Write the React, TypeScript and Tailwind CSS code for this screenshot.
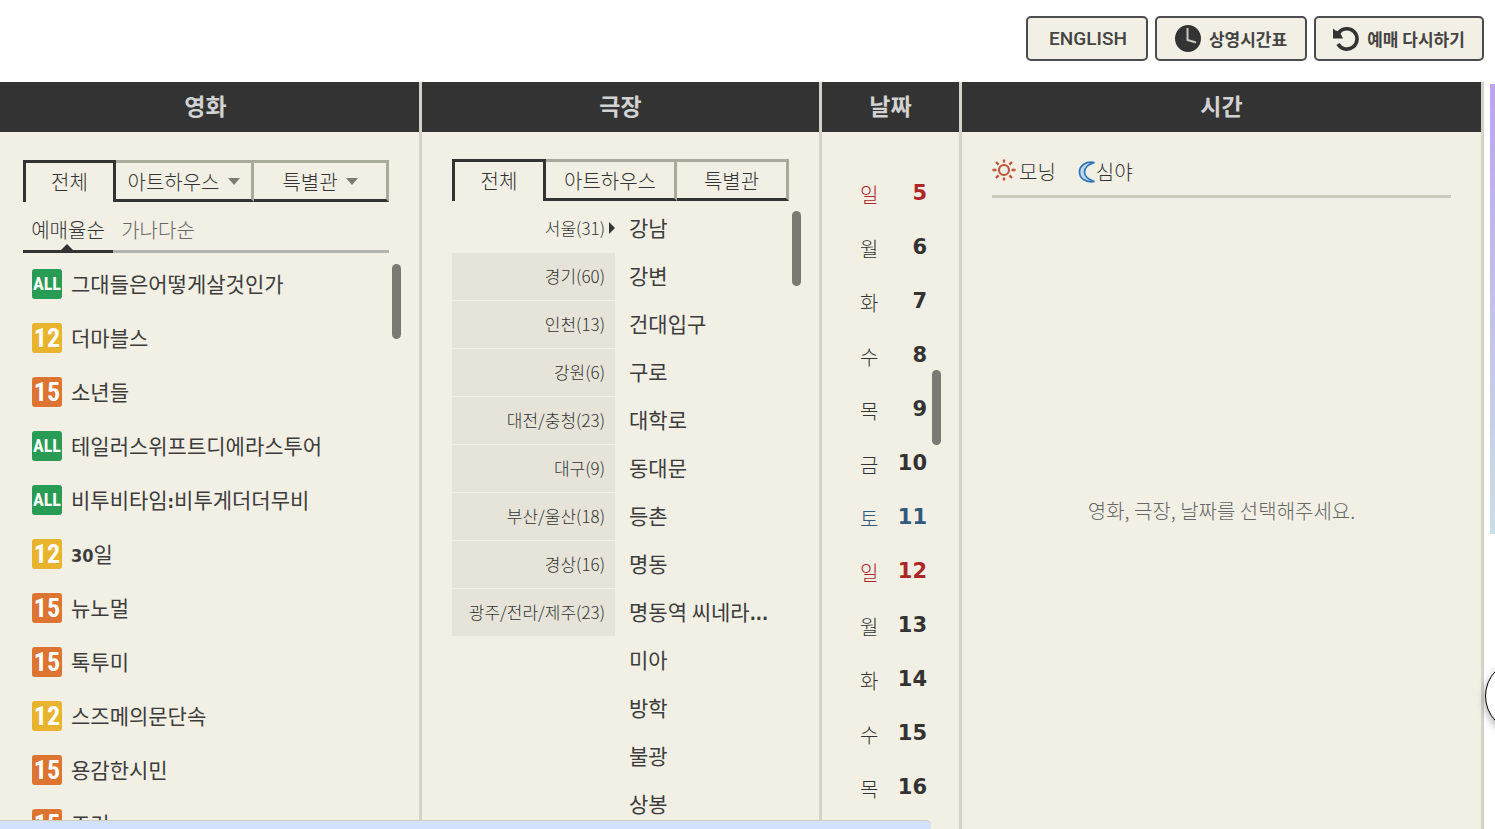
import type { ReactNode } from "react";

type Rating = "ALL" | "12" | "15";

const movies: { rating: Rating; title: string }[] = [
  { rating: "ALL", title: "그대들은어떻게살것인가" },
  { rating: "12", title: "더마블스" },
  { rating: "15", title: "소년들" },
  { rating: "ALL", title: "테일러스위프트디에라스투어" },
  { rating: "ALL", title: "비투비타임:비투게더더무비" },
  { rating: "12", title: "30일" },
  { rating: "15", title: "뉴노멀" },
  { rating: "15", title: "톡투미" },
  { rating: "12", title: "스즈메의문단속" },
  { rating: "15", title: "용감한시민" },
  { rating: "15", title: "조커" },
];

const regions = [
  { name: "서울", count: 31 },
  { name: "경기", count: 60 },
  { name: "인천", count: 13 },
  { name: "강원", count: 6 },
  { name: "대전/충청", count: 23 },
  { name: "대구", count: 9 },
  { name: "부산/울산", count: 18 },
  { name: "경상", count: 16 },
  { name: "광주/전라/제주", count: 23 },
];

const theaters = [
  "강남",
  "강변",
  "건대입구",
  "구로",
  "대학로",
  "동대문",
  "등촌",
  "명동",
  "명동역 씨네라...",
  "미아",
  "방학",
  "불광",
  "상봉",
];

const dates = [
  ["일", 5],
  ["월", 6],
  ["화", 7],
  ["수", 8],
  ["목", 9],
  ["금", 10],
  ["토", 11],
  ["일", 12],
  ["월", 13],
  ["화", 14],
  ["수", 15],
  ["목", 16],
] as const;

const ratingStyle: Record<Rating, string> = {
  ALL: "bg-[#289b55] text-[18px]",
  "12": "bg-[#e8b42e] text-[26px]",
  "15": "bg-[#dd7431] text-[26px]",
};

function RatingBadge({ rating }: { rating: Rating }) {
  return (
    <span
      className={`flex size-[30px] shrink-0 items-center justify-center rounded-[3px] font-['Roboto_Condensed','Noto_Sans_CJK_KR',sans-serif] leading-none font-bold text-white ${ratingStyle[rating]}`}
    >
      {rating}
    </span>
  );
}

/* Latin characters and digits inside a title are set in a bold Latin face. */
function Title({ text }: { text: string }) {
  return (
    <span>
      {text.split(/([0-9:.]+)/).map((part, i) =>
        i % 2 === 1 ? (
          <span key={i} className="font-['DejaVu_Sans_Condensed','DejaVu_Sans',sans-serif] text-[18px] font-bold">
            {part}
          </span>
        ) : (
          part
        ),
      )}
    </span>
  );
}

function Column({
  title,
  titleClass = "",
  children,
}: {
  title: string;
  titleClass?: string;
  children: ReactNode;
}) {
  return (
    <section className="flex min-h-0 min-w-0 flex-col border-r-[3px] border-[#d3d3c8]">
      <h2
        className={`flex h-[50px] shrink-0 items-center justify-center bg-[#333] pb-[3px] text-[23px] font-bold text-[#d2d2d2] ${titleClass}`}
      >
        {title}
      </h2>
      <div className="relative flex min-h-0 flex-1 flex-col">{children}</div>
    </section>
  );
}

function TabBar({
  tabs,
  columns,
  arrows = false,
}: {
  tabs: string[];
  columns: string;
  arrows?: boolean;
}) {
  return (
    <div className={`grid h-[42px] shrink-0 text-[20px] ${columns}`}>
      {tabs.map((tab, i) =>
        i === 0 ? (
          <button key={tab} type="button" className="border-x-[3px] border-t-[3px] border-[#333] pb-[2px]">
            {tab}
          </button>
        ) : (
          <button
            key={tab}
            type="button"
            className="flex items-center justify-center gap-2 border-t-[3px] border-r-[3px] border-b-[3px] border-[#a9a99c] border-b-[#333] pt-px whitespace-nowrap"
          >
            {tab}
            {arrows && (
              <svg viewBox="0 0 12 7" className="h-[7px] w-3 fill-[#7c7c72]">
                <path d="M0 0h12L6 7z" />
              </svg>
            )}
          </button>
        ),
      )}
    </div>
  );
}

function ScrollThumb({ className }: { className: string }) {
  return <span className={`absolute h-[75px] w-[9px] rounded-full bg-[#7b7972] ${className}`} />;
}

function MovieColumn() {
  return (
    <Column title="영화" titleClass="pr-2">
      <div className="flex min-h-0 flex-1 flex-col pt-7 pr-[30px] pl-[23px]">
        <TabBar tabs={["전체", "아트하우스", "특별관"]} columns="grid-cols-[93fr_138fr_135fr]" arrows />
        <div className="flex h-[51px] shrink-0 border-b-[3px] border-[#b3b3b0] text-[20px]">
          <button
            type="button"
            className="relative -mb-[3px] w-[90px] border-b-[3px] border-[#333] pt-[7px] whitespace-nowrap"
          >
            예매율순
            <svg viewBox="0 0 12 6" className="absolute bottom-0 left-[38px] h-[6px] w-3 fill-[#333]">
              <path d="M6 0l6 6H0z" />
            </svg>
          </button>
          <button type="button" className="-mb-[3px] w-[90px] border-b-[3px] border-transparent pt-[7px] whitespace-nowrap text-[#666]">
            가나다순
          </button>
        </div>
        <ul className="mt-1 min-h-0 flex-1 overflow-y-auto font-normal text-[#3c3c3c] [scrollbar-width:none]">
          {movies.map((m) => (
            <li key={m.title}>
              <a href="#" className="flex h-[54px] items-center gap-[9px] pl-[9px] text-[21px] whitespace-nowrap">
                <RatingBadge rating={m.rating} />
                <Title text={m.title} />
              </a>
            </li>
          ))}
        </ul>
      </div>
      <ScrollThumb className="top-[132px] right-[18px]" />
    </Column>
  );
}

function TheaterColumn() {
  return (
    <Column title="극장">
      <div className="flex min-h-0 flex-1 flex-col px-[30px] pt-[27px]">
        <TabBar tabs={["전체", "아트하우스", "특별관"]} columns="grid-cols-[94fr_131fr_112fr]" />
        <div className="mt-1 flex min-h-0 flex-1 gap-[14px]">
          <ul className="w-[163px] shrink-0 text-[17px]">
            {regions.map((r, i) => (
              <li key={r.name} className="h-12 pb-px">
                <a
                  href="#"
                  className={`flex h-full items-center justify-end pb-px whitespace-nowrap ${i === 0 ? "gap-1" : "bg-[#e6e4d9] pr-[10px]"}`}
                >
                  {r.name}({r.count})
                  {i === 0 && (
                    <svg viewBox="0 0 6 12" className="h-3 w-[6px] fill-[#333]">
                      <path d="M0 0l6 6-6 6z" />
                    </svg>
                  )}
                </a>
              </li>
            ))}
          </ul>
          <ul className="min-w-0 flex-1 overflow-y-auto text-[21px] font-normal text-[#3c3c3c] [scrollbar-width:none]">
            {theaters.map((t) => (
              <li key={t}>
                <a href="#" className="flex h-12 items-center pb-[2px] whitespace-nowrap">
                  <Title text={t} />
                </a>
              </li>
            ))}
          </ul>
        </div>
      </div>
      <ScrollThumb className="top-[79px] right-[18px]" />
    </Column>
  );
}

function dateColor(index: number) {
  if (index % 7 === 0) return "text-[#ad2727]";
  if (index % 7 === 6) return "text-[#31597e]";
  return "text-[#333]";
}

function DateColumn() {
  return (
    <Column title="날짜">
      <ul className="min-h-0 flex-1 overflow-y-auto pt-[33px] [scrollbar-width:none]">
        {dates.map(([day, date], i) => (
          <li key={date}>
            <a href="#" className={`flex h-[54px] items-center justify-between pr-8 pl-[38px] ${dateColor(i)}`}>
              <span className="pt-[6px] text-[20px]">{day}</span>
              <span className="pt-[3px] font-['DejaVu_Sans',sans-serif] text-[21px] font-bold">{date}</span>
            </a>
          </li>
        ))}
      </ul>
      <ScrollThumb className="top-[238px] right-[18px]" />
    </Column>
  );
}

function SunIcon() {
  return (
    <svg viewBox="0 0 24 22" className="-mt-1 h-[22px] w-6" fill="none" stroke="#c0543c">
      <circle cx="12" cy="11" r="5" strokeWidth="2.2" />
      <g strokeWidth="2.4">
        <path d="M12 0.5v3M12 18.5v3M0.5 11h4M19.5 11h4M4 3l2.6 2.6M17.4 16.4L20 19M20 3l-2.6 2.6M6.6 16.4L4 19" />
      </g>
    </svg>
  );
}

function MoonIcon() {
  return (
    <svg viewBox="0 0 18 22" className="h-[22px] w-[18px]" fill="#c4d8e8" stroke="#2f76b8" strokeWidth="1.7">
      <path d="M16.500 1.500C7 0 1.500 5 1.500 11S7 22 16.500 20.500C10 18.500 6.500 15.500 6.500 11S10 3.500 16.500 1.500z" />
    </svg>
  );
}

function TimeColumn() {
  return (
    <Column title="시간">
      <div className="mx-[30px] flex h-[66px] shrink-0 items-center gap-[22px] border-b-[3px] border-[#cdcabc] pt-4 text-[20px]">
        <span className="flex items-center gap-[3px]">
          <SunIcon />
          모닝
        </span>
        <span className="flex items-center">
          <MoonIcon />
          심야
        </span>
      </div>
      <div className="flex flex-1 items-center justify-center pb-[6px] text-[20px] text-[#666]">
        <p>영화, 극장, 날짜를 선택해주세요.</p>
      </div>
    </Column>
  );
}

const actionButton =
  "flex h-[45px] items-center justify-center rounded-[5px] border-2 border-[#4b4c50] bg-[#f2f0e5] whitespace-nowrap text-[#444]";

export default function App() {
  return (
    <div className="relative flex h-screen flex-col overflow-hidden bg-white pr-[11px] font-['Noto_Sans_CJK_KR',sans-serif] font-light text-[#333]">
      <header className="flex h-[82px] shrink-0 items-start justify-end gap-[7px] pt-4">
        <button
          type="button"
          className={`${actionButton} w-[122px] pt-[2px] pl-[2px] font-['Roboto',sans-serif] text-[19px] font-medium`}
        >
          ENGLISH
        </button>
        <button type="button" className={`${actionButton} w-[152px] gap-2 text-[17px] font-bold`}>
          <svg viewBox="0 0 26 28" className="h-7 w-[26px]">
            <ellipse cx="13" cy="13.5" rx="13" ry="13.5" fill="#333" />
            <path d="M12.500 3v12l8.500 2.500" fill="none" stroke="#c9c8c0" strokeWidth="2" />
          </svg>
          상영시간표
        </button>
        <button type="button" className={`${actionButton} w-[170px] gap-2 text-[17px] font-bold`}>
          <svg viewBox="0 0 26 26" className="size-[26px]">
            <path d="M5.500 7A10.200 10.200 0 1 1 5 18" fill="none" stroke="#333" strokeWidth="3.600" />
            <path d="M0 2.500l2.500 2 4 1 3.500 7H0z" fill="#333" />
          </svg>
          예매 다시하기
        </button>
      </header>

      <main className="grid min-h-0 flex-1 grid-cols-[422fr_400fr_140fr_522fr] grid-rows-[minmax(0,1fr)] bg-[#f2f0e5]">
        <MovieColumn />
        <TheaterColumn />
        <DateColumn />
        <TimeColumn />
      </main>

      <div className="absolute top-[84px] right-0 h-[450px] w-[5px] bg-linear-to-b from-[#bda3ee] to-[#c8dfe6]" />
      <div className="absolute top-[660px] -right-[62px] size-[72px] rounded-full border border-black bg-white shadow-[0_3px_8px_rgba(0,0,0,0.35)]" />
      <div className="absolute bottom-0 left-0 h-[9px] w-[931px] rounded-tr-[5px] border-t border-[#cfcdc2] bg-[#d3e3fd]" />
    </div>
  );
}
